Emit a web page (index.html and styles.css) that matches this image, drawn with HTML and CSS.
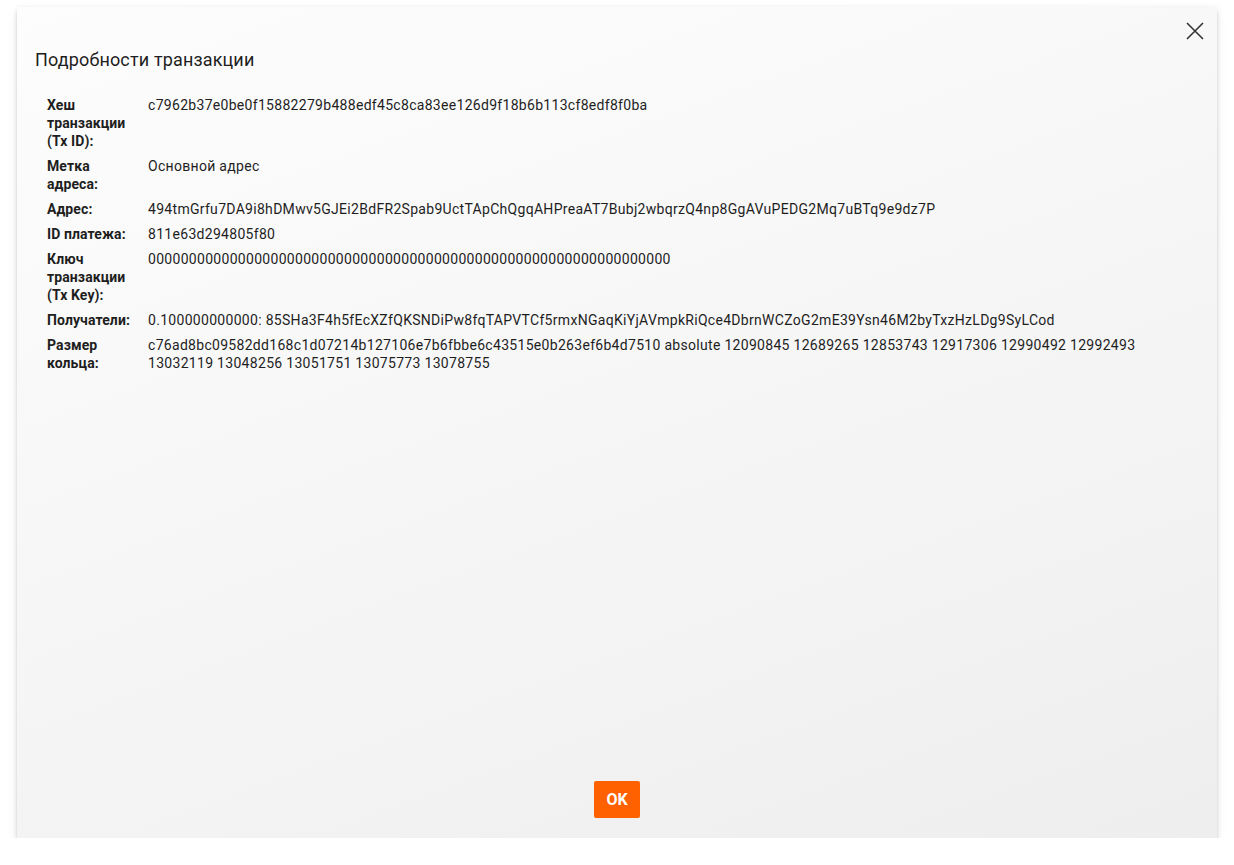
FILE: index.html
```html
<!DOCTYPE html>
<html lang="ru">
<head>
    <meta charset="UTF-8">
    <meta name="viewport" content="width=device-width,initial-scale=1">
    <title>Подробности транзакции</title>
    <link rel="stylesheet" href="styles.css">
</head>
<body>
    <div class="dialog">
        <button class="close" aria-label="Закрыть">
            <svg width="18" height="18" viewBox="0 0 18 18">
                <path d="M1 1 L17 17 M17 1 L1 17" stroke="#333" stroke-width="1.6" fill="none"/>
            </svg>
        </button>
        <h2 class="title">Подробности транзакции</h2>
        <div class="details">
            <div class="label">Хеш транзакции (Tx ID):</div>
            <div class="value">c7962b37e0be0f15882279b488edf45c8ca83ee126d9f18b6b113cf8edf8f0ba</div>

            <div class="label">Метка адреса:</div>
            <div class="value">Основной адрес</div>

            <div class="label">Адрес:</div>
            <div class="value">494tmGrfu7DA9i8hDMwv5GJEi2BdFR2Spab9UctTApChQgqAHPreaAT7Bubj2wbqrzQ4np8GgAVuPEDG2Mq7uBTq9e9dz7P</div>

            <div class="label">ID платежа:</div>
            <div class="value">811e63d294805f80</div>

            <div class="label">Ключ транзакции (Tx Key):</div>
            <div class="value">0000000000000000000000000000000000000000000000000000000000000000</div>

            <div class="label">Получатели:</div>
            <div class="value">0.100000000000: 85SHa3F4h5fEcXZfQKSNDiPw8fqTAPVTCf5rmxNGaqKiYjAVmpkRiQce4DbrnWCZoG2mE39Ysn46M2byTxzHzLDg9SyLCod</div>

            <div class="label">Размер кольца:</div>
            <div class="value">c76ad8bc09582dd168c1d07214b127106e7b6fbbe6c43515e0b263ef6b4d7510 absolute 12090845 12689265 12853743 12917306 12990492 12992493 13032119 13048256 13051751 13075773 13078755</div>
        </div>
        <div class="actions">
            <button class="ok">OK</button>
        </div>
    </div>
</body>
</html>
```

FILE: styles.css
```css
body {
    margin: 0;
    background: #ffffff;
    font-family: Roboto, "Noto Sans", sans-serif;
    color: #1e1e1e;
}
.dialog {
    position: relative;
    box-sizing: border-box;
    margin: 7px 17px 0;
    height: 831px;
    display: flex;
    flex-direction: column;
    background: linear-gradient(160deg, #fdfdfd 0%, #f6f6f6 50%, #eeeeee 100%);
    box-shadow: 0 4px 3px rgba(0,0,0,0.12), 0 6px 10px rgba(0,0,0,0.08), 0 0 6px rgba(0,0,0,0.06);
}
.close {
    position: absolute;
    top: 13px;
    right: 11px;
    width: 22px;
    height: 22px;
    padding: 2px;
    border: none;
    background: none;
    cursor: pointer;
}
.title {
    margin: 41px 0 0 18px;
    font-size: 18px;
    font-weight: 400;
    line-height: 24px;
    letter-spacing: 0.15px;
    color: #1e1e1e;
}
.details {
    display: grid;
    grid-template-columns: 93px 1fr;
    column-gap: 8px;
    row-gap: 7px;
    margin: 24px 30px 0 30px;
    font-size: 14px;
    line-height: 18px;
    letter-spacing: 0.3px;
}
.label {
    font-weight: 700;
    letter-spacing: 0.1px;
}
.value {
    overflow-wrap: anywhere;
}
.actions {
    margin-top: auto;
    display: flex;
    justify-content: center;
    padding-bottom: 20px;
}
.ok {
    width: 46px;
    height: 37px;
    border: none;
    border-radius: 2px;
    background: #ff6000;
    color: #ffffff;
    font-family: Roboto, "Noto Sans", sans-serif;
    font-size: 16px;
    font-weight: 700;
    cursor: pointer;
}
```
